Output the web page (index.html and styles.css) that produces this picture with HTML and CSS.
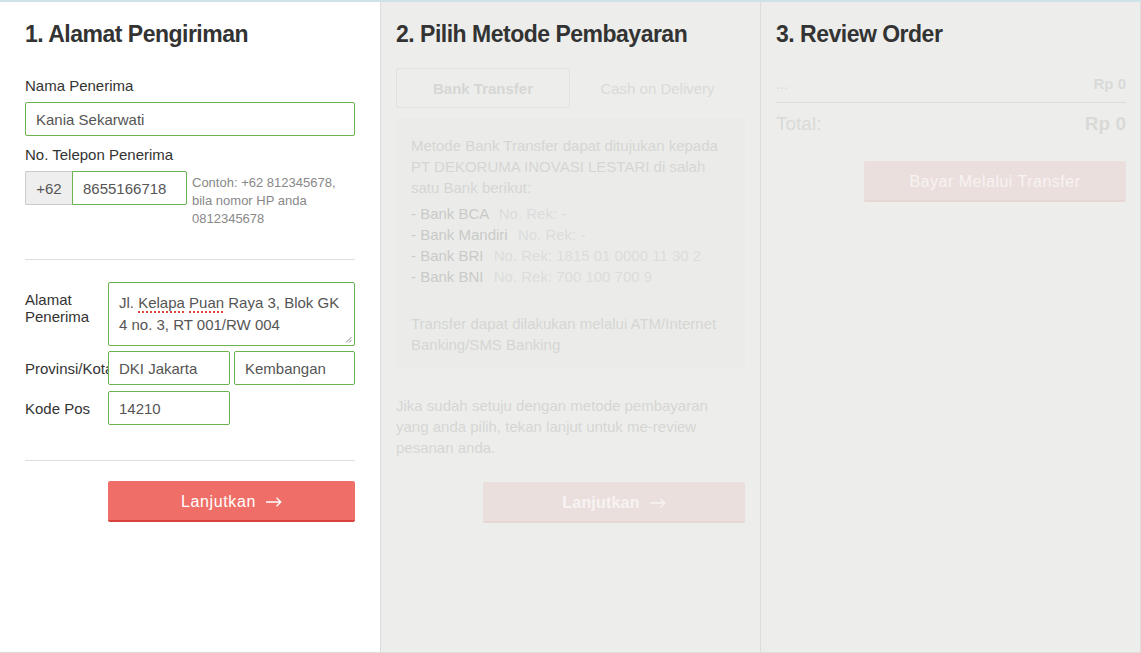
FILE: index.html
```html
<!DOCTYPE html>
<html lang="id">
<head>
    <meta charset="UTF-8">
    <meta name="viewport" content="width=device-width, initial-scale=1.0">
    <title>Checkout</title>
    <link rel="stylesheet" href="styles.css">
</head>
<body>
    <div class="checkout">
        <section class="step step-address">
            <h2 class="step-title">1. Alamat Pengiriman</h2>

            <div class="field field-first">
                <label class="field-label" for="nama">Nama Penerima</label>
                <input class="input" id="nama" type="text" value="Kania Sekarwati">
            </div>

            <div class="field">
                <label class="field-label" for="telepon">No. Telepon Penerima</label>
                <div class="phone-row">
                    <span class="phone-code">+62</span>
                    <input class="input phone-input" id="telepon" type="text" value="8655166718">
                    <p class="phone-hint">Contoh: +62 812345678,<br>bila nomor HP anda<br>0812345678</p>
                </div>
            </div>

            <hr class="divider">

            <div class="address-row">
                <label class="row-label">Alamat Penerima</label>
                <div class="textarea" role="textbox">
                    Jl. <span class="typo">Kelapa</span> <span class="typo">Puan</span> Raya 3, Blok GK<br>4 no. 3, RT 001/RW 004
                    <svg class="grip" width="7" height="7" viewBox="0 0 7 7">
                        <path d="M1 6.5 6.5 1M4 6.5 6.5 4" stroke="#8a8a8a" stroke-width="1"/>
                    </svg>
                </div>
            </div>
            <div class="address-row">
                <label class="row-label">Provinsi/Kota</label>
                <div class="row-inputs">
                    <input class="input input-half" type="text" value="DKI Jakarta">
                    <input class="input input-half" type="text" value="Kembangan">
                </div>
            </div>
            <div class="address-row address-row-last">
                <label class="row-label">Kode Pos</label>
                <div class="row-inputs">
                    <input class="input input-half" type="text" value="14210">
                </div>
            </div>

            <hr class="divider divider-bottom">

            <button class="btn btn-next">
                Lanjutkan
                <svg width="16" height="10" viewBox="0 0 16 10"><path d="M0 5h15M10.5 0.8 14.8 5l-4.3 4.2" fill="none" stroke="currentColor" stroke-width="1.3"/></svg>
            </button>
        </section>

        <section class="step step-payment">
            <h2 class="step-title">2. Pilih Metode Pembayaran</h2>

            <div class="tabs">
                <div class="tab active">Bank Transfer</div>
                <div class="tab">Cash on Delivery</div>
            </div>

            <div class="bank-info">
                <p>Metode Bank Transfer dapat ditujukan kepada<br>PT DEKORUMA INOVASI LESTARI di salah<br>satu Bank berikut:</p>
                <ul class="bank-list">
                    <li>- Bank BCA <span class="rek">No. Rek: -</span></li>
                    <li>- Bank Mandiri <span class="rek">No. Rek: -</span></li>
                    <li>- Bank BRI <span class="rek">No. Rek: 1815 01 0000 11 30 2</span></li>
                    <li>- Bank BNI <span class="rek">No. Rek: 700 100 700 9</span></li>
                </ul>
                <p class="bank-note">Transfer dapat dilakukan melalui ATM/Internet<br>Banking/SMS Banking</p>
            </div>

            <p class="step-hint">Jika sudah setuju dengan metode pembayaran<br>yang anda pilih, tekan lanjut untuk me-review<br>pesanan anda.</p>

            <button class="btn btn-disabled btn-wide" disabled>
                Lanjutkan
                <svg width="16" height="10" viewBox="0 0 16 10"><path d="M0 5h15M10.5 0.8 14.8 5l-4.3 4.2" fill="none" stroke="currentColor" stroke-width="1.3"/></svg>
            </button>
        </section>

        <section class="step step-review">
            <h2 class="step-title">3. Review Order</h2>

            <div class="summary-row">
                <span>...</span>
                <strong>Rp 0</strong>
            </div>
            <div class="summary-total">
                <span>Total:</span>
                <strong>Rp 0</strong>
            </div>

            <button class="btn btn-disabled btn-wide btn-pay" disabled>Bayar Melalui Transfer</button>
        </section>
    </div>
</body>
</html>
```

FILE: styles.css
```css
* {
    box-sizing: border-box;
}
body {
    margin: 0;
    font-family: "Liberation Sans", Arial, sans-serif;
    color: #333;
    background-color: #fff;
    overflow: hidden;
}
.checkout {
    display: grid;
    grid-template-columns: 381px 380px 380px;
    border-top: 2px solid #cde3e8;
}
.step {
    height: 651px;
    padding: 18px 15px 0;
    border-right: 1px solid #dcdddb;
    border-bottom: 1px solid #dcdddb;
    background-color: #edeeec;
}
.step-address {
    padding: 18px 25px 0;
    background-color: #fff;
}
.step-review {
    padding-right: 14px;
}
.step-title {
    margin: 0;
    font-size: 23px;
    line-height: 28px;
    font-weight: bold;
    letter-spacing: -0.5px;
    color: #333;
}

/* step 1 */
.field {
    margin-top: 9px;
}
.field-first {
    margin-top: 28px;
}
.field-label {
    display: block;
    margin-bottom: 6px;
    font-size: 15px;
    line-height: 20px;
}
.input {
    display: block;
    width: 100%;
    height: 34px;
    padding: 0 10px;
    border: 1px solid #6ab150;
    border-radius: 2px;
    background-color: #fff;
    font-family: "Liberation Sans", Arial, sans-serif;
    font-size: 15px;
    color: #555;
    outline: none;
}
.phone-row {
    display: flex;
    align-items: flex-start;
}
.phone-code {
    display: flex;
    align-items: center;
    justify-content: center;
    flex: none;
    width: 47px;
    height: 34px;
    border: 1px solid #ccc;
    border-right: 0;
    border-radius: 2px 0 0 2px;
    background-color: #eee;
    font-size: 15px;
    color: #555;
}
.phone-input {
    flex: none;
    width: 115px;
    border-radius: 0 2px 2px 0;
}
.phone-hint {
    margin: 3px 0 0 5px;
    font-size: 13px;
    line-height: 18px;
    color: #888;
}
.divider {
    margin: 31px 0 22px;
    border: 0;
    border-top: 1px solid #ddd;
}
.divider-bottom {
    margin: 35px 0 20px;
}
.address-row {
    display: flex;
}
.address-row + .address-row {
    margin-top: 5px;
}
.address-row-last {
    margin-top: 6px;
}
.address-row + .address-row-last {
    margin-top: 6px;
}
.row-label {
    flex: none;
    width: 83px;
    padding-top: 9px;
    font-size: 15px;
    line-height: 17px;
}
.textarea {
    position: relative;
    flex: 1;
    height: 64px;
    padding: 9px 10px;
    border: 1px solid #6ab150;
    border-radius: 2px;
    background-color: #fff;
    font-size: 15px;
    line-height: 22px;
    color: #555;
}
.typo {
    text-decoration: underline dotted #e2433c;
    text-decoration-thickness: 1.5px;
    text-underline-offset: 3px;
}
.grip {
    position: absolute;
    right: 2px;
    bottom: 2px;
}
.row-inputs {
    display: flex;
    flex: 1;
    gap: 4px;
}
.input-half {
    width: 122px;
}
.row-inputs .input-half + .input-half {
    width: 121px;
}

/* buttons */
.btn {
    display: flex;
    align-items: center;
    justify-content: center;
    gap: 10px;
    height: 41px;
    padding: 3px 0 0;
    border: 0;
    border-bottom: 2px solid #d8443d;
    border-radius: 2px;
    background-color: #ef6f68;
    font-family: "Liberation Sans", Arial, sans-serif;
    font-size: 16px;
    letter-spacing: 0.6px;
    color: #fff;
    cursor: pointer;
}
.btn-next {
    width: 247px;
    margin-left: 83px;
}
.btn-disabled {
    border-bottom-color: #e6d6d4;
    background-color: #ebdfdd;
    font-weight: bold;
    letter-spacing: 0.2px;
    color: #f7f3f2;
    cursor: default;
}
.btn-wide {
    width: 262px;
    margin-top: 24px;
    margin-left: 87px;
}
.btn-pay {
    margin-top: 25px;
    margin-left: 88px;
    font-weight: normal;
    letter-spacing: 0.5px;
}

/* step 2 */
.tabs {
    display: flex;
    margin-top: 20px;
}
.tab {
    display: flex;
    align-items: center;
    justify-content: center;
    width: 174px;
    height: 40px;
    font-size: 15px;
    color: #d9dad8;
}
.tab + .tab {
    width: 175px;
}
.tab.active {
    border: 1px solid #e1e2e0;
    border-radius: 2px;
    font-weight: bold;
    color: #d6d7d5;
}
.bank-info {
    margin-top: 10px;
    padding: 17px 15px 13px;
    background-color: #ebecea;
    font-size: 15px;
    line-height: 21px;
    color: #d5d6d4;
}
.bank-info p {
    margin: 0;
}
.bank-list {
    margin: 5px 0 0;
    padding: 0;
    list-style: none;
    color: #c9cac8;
}
.rek {
    margin-left: 6px;
    color: #dcdddb;
}
.bank-info .bank-note {
    margin-top: 26px;
}
.step-hint {
    margin: 27px 0 0;
    font-size: 15px;
    line-height: 21px;
    color: #d5d6d4;
}

/* step 3 */
.summary-row {
    display: flex;
    justify-content: space-between;
    margin-top: 25px;
    padding-bottom: 8px;
    border-bottom: 1px solid #dcdddb;
    font-size: 15px;
    line-height: 21px;
    color: #d9dad8;
}
.summary-total {
    display: flex;
    justify-content: space-between;
    margin-top: 9px;
    font-size: 19px;
    line-height: 24px;
    color: #d9dad8;
}
```
